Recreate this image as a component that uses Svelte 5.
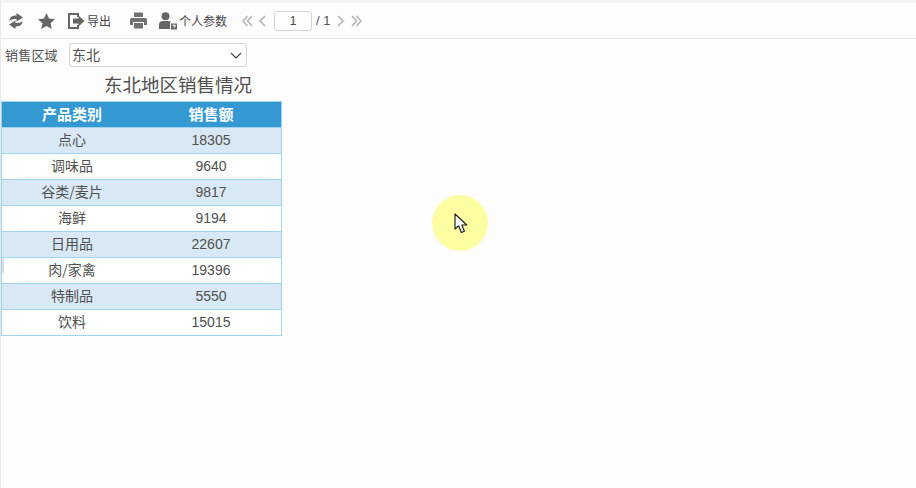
<script lang="ts">
    const rows = [
        ["点心", 18305],
        ["调味品", 9640],
        ["谷类/麦片", 9817],
        ["海鲜", 9194],
        ["日用品", 22607],
        ["肉/家禽", 19396],
        ["特制品", 5550],
        ["饮料", 15015]
    ];
</script>

<div class="page">
    <div class="toolbar">
        <svg class="ico refresh" width="14" height="16" viewBox="0 0 14 16">
            <path d="M0.5 8 C0.5 3.5 4 2.4 7.5 2.4 V0 L14 4.5 L7.5 8.6 V6 C5 6 2.5 6 0.5 8 Z" fill="#666" />
            <path d="M13.5 8 C13.5 12.5 10 13.6 6.5 13.6 V16 L0 11.5 L6.5 7.4 V10 C9 10 11.5 10 13.5 8 Z" fill="#666" />
        </svg>
        <svg class="ico star" width="17" height="16" viewBox="0 0 17 16">
            <path d="M8.5 0 L11 5.5 L17 6.2 L12.5 10.2 L13.8 16 L8.5 13 L3.2 16 L4.5 10.2 L0 6.2 L6 5.5 Z" fill="#666" />
        </svg>
        <svg class="ico export" width="17" height="16" viewBox="0 0 17 16">
            <path d="M10 4 V1 H1 V15 H10 V12" fill="none" stroke="#666" stroke-width="2" />
            <path d="M5 5.5 H10.5 V2.5 L16.5 8 L10.5 13.5 V10.5 H5 Z" fill="#666" />
        </svg>
        <span class="label export-label">导出</span>
        <svg class="ico print" width="17" height="17" viewBox="0 0 17 17">
            <path d="M4 0.5 H13 V5 H4 Z M1.5 6 H15.5 Q17 6 17 7.5 V13 H14 V10 H3 V13 H0 V7.5 Q0 6 1.5 6 Z M4 11 H13 V16.5 H4 Z" fill="#707070" />
        </svg>
        <svg class="ico user" width="19" height="18" viewBox="0 0 19 18">
            <circle cx="6.5" cy="4.2" r="4" fill="#666" />
            <path d="M0 17 V13 Q0 9 4 9 H9 Q11 9 12 10 V17 Z" fill="#666" />
            <rect x="11.5" y="11" width="7" height="7" fill="#666" stroke="#fff" />
            <path d="M13.5 13.2 H16.2 V14.6 H15 V15.6" fill="none" stroke="#fff" />
        </svg>
        <span class="label user-label">个人参数</span>
        <div class="pager">
            <svg width="11" height="12" viewBox="0 0 11 12"><path d="M5.5 1 L1 6 L5.5 11 M10 1 L5.5 6 L10 11" class="chev" /></svg>
            <svg class="single" width="7" height="12" viewBox="0 0 7 12"><path d="M6 1 L1 6 L6 11" class="chev" /></svg>
            <input class="page-no" value="1" />
            <span class="total">/ 1</span>
            <svg class="single" width="7" height="12" viewBox="0 0 7 12"><path d="M1 1 L6 6 L1 11" class="chev" /></svg>
            <svg class="double-end" width="11" height="12" viewBox="0 0 11 12"><path d="M1 1 L5.5 6 L1 11 M5.5 1 L10 6 L5.5 11" class="chev" /></svg>
        </div>
    </div>

    <div class="filter">
        <span class="filter-label">销售区域</span>
        <div class="select">
            <span>东北</span>
            <svg width="12" height="7" viewBox="0 0 12 7"><path d="M1 1 L6 6 L11 1" fill="none" stroke="#444" stroke-width="1.2" /></svg>
        </div>
    </div>

    <div class="report">
        <div class="title">东北地区销售情况</div>
        <table>
            <thead>
                <tr><th class="c1">产品类别</th><th class="c2">销售额</th></tr>
            </thead>
            <tbody>
                {#each rows as row, i}
                    <tr class:alt={i % 2 == 0}>
                        <td class="c1">{row[0]}</td>
                        <td class="c2">{row[1]}</td>
                    </tr>
                {/each}
            </tbody>
        </table>
    </div>

    <!-- leftover scroll mark in the recording -->
    <div class="edge-mark"></div>

    <!-- the recording's click highlight, floats over the page -->
    <div class="cursor-spot">
        <svg width="15" height="21" viewBox="0 0 15 21">
            <path d="M1 1 V16 L4.6 12.8 L7.4 19.5 L10.4 18.2 L7.8 12 H12.8 Z" fill="#fff" stroke="#222" stroke-width="1.2" stroke-linejoin="round" />
        </svg>
    </div>
</div>

<style>
    :global(body) {
        margin: 0;
        background: #fdfdfd;
    }
    .page {
        position: relative;
        width: 916px;
        height: 488px;
        overflow: hidden;
        box-sizing: border-box;
        border-left: 1px solid #e8e8e8;
        border-top: 3px solid #f3f3f3;
        font-family: "Noto Sans CJK SC", "Liberation Sans", sans-serif;
        color: #505050;
    }
    .toolbar {
        display: flex;
        align-items: center;
        height: 36px;
        box-sizing: border-box;
        padding-left: 8px;
        border-bottom: 1px solid #e6e6e6;
    }
    .label {
        font-size: 12px;
        color: #444;
        white-space: nowrap;
    }
    .star { margin-left: 15px; }
    .export { margin-left: 13px; }
    .export-label { margin-left: 2px; width: 24px; }
    .print { margin-left: 19px; }
    .user { margin-left: 12px; }
    .user-label { margin-left: 1px; width: 48px; }
    .pager {
        display: flex;
        align-items: center;
        margin-left: 15px;
    }
    .chev {
        fill: none;
        stroke: #b4b4b4;
        stroke-width: 1.6;
    }
    .single { margin-left: 6px; }
    .double-end { margin-left: 7px; }
    .page-no {
        width: 38px;
        height: 20px;
        box-sizing: border-box;
        margin: 0 4px 0 8px;
        border: 1px solid #d4d4d4;
        border-radius: 3px;
        background: #fff;
        color: #444;
        font-family: "Liberation Sans", sans-serif;
        font-size: 12px;
        text-align: center;
        padding: 0;
    }
    .total {
        font-family: "Liberation Sans", sans-serif;
        font-size: 13px;
        color: #555;
        margin-right: 1px;
    }
    .filter {
        display: flex;
        align-items: flex-start;
        height: 32px;
        padding: 4px 0 0 4px;
        box-sizing: border-box;
    }
    .filter-label {
        font-size: 13px;
        letter-spacing: 0.2px;
        line-height: 24px;
        width: 64px;
        white-space: nowrap;
    }
    .select {
        display: flex;
        align-items: center;
        justify-content: space-between;
        width: 178px;
        height: 24px;
        box-sizing: border-box;
        padding: 0 3px 0 2px;
        border: 1px solid #d4d4d4;
        border-radius: 3px;
        background: #fff;
        font-size: 14px;
    }
    .select span { position: relative; top: -1px; }
    .select svg { margin-right: 1px; }
    .report {
        width: 281px;
    }
    .title {
        height: 30px;
        line-height: 26px;
        font-size: 18.5px;
        color: #505050;
        text-align: center;
        padding-left: 73px;
        box-sizing: border-box;
        white-space: nowrap;
    }
    table {
        width: 281px;
        border-collapse: separate;
        border-spacing: 0;
        table-layout: fixed;
        font-size: 14px;
        background: #fff;
    }
    th, td {
        height: 26px;
        padding: 0 0 3px;
        text-align: center;
        border-bottom: 1px solid #9fd3ee;
        box-sizing: border-box;
        line-height: 1;
    }
    th {
        height: 27px;
        border-top: 1px solid #9fd3ee;
        background: #3499d3;
        color: #fff;
        font-weight: 700;
        font-size: 15px;
    }
    .c1 { border-left: 1px solid #9fd3ee; }
    .c2 { border-right: 1px solid #9fd3ee; padding-right: 1px; }
    td.c2 { font-family: "Liberation Sans", sans-serif; padding-bottom: 2px; }
    th.c1 { width: 141px; }
    tr.alt td { background: #d8e8f5; }
    .edge-mark {
        position: absolute;
        left: 1px;
        top: 255px;
        width: 2px;
        height: 15px;
        background: #dcdcdc;
    }
    .cursor-spot {
        position: absolute;
        left: 431px;
        top: 192px;
        width: 56px;
        height: 56px;
        border-radius: 50%;
        background: #fdfda2;
    }
    .cursor-spot svg {
        position: absolute;
        left: 22px;
        top: 18px;
    }
</style>
